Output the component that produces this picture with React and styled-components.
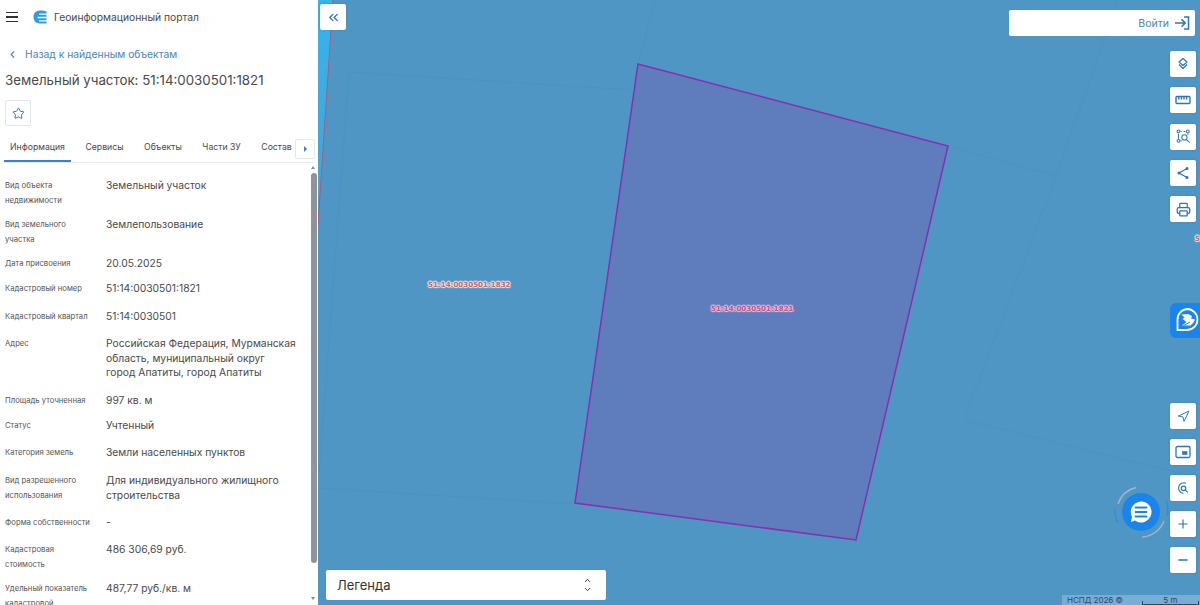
import React from "react";
import styled, { createGlobalStyle } from "styled-components";
import {
  ChevronLeft,
  ChevronsLeft,
  ChevronUp,
  ChevronDown,
  Star,
  Printer,
  Navigation,
  Plus,
  Minus,
} from "lucide-react";

const GlobalStyle = createGlobalStyle`
  html, body {
    margin: 0;
    padding: 0;
    height: 100%;
    overflow: hidden;
    font-family: Inter, "Noto Sans", sans-serif;
  }
  #root {
    height: 100%;
  }
`;

const Page = styled.div`
  display: flex;
  width: 1200px;
  height: 605px;
  overflow: hidden;
`;

const Sidebar = styled.aside`
  width: 318px;
  flex: 0 0 318px;
  display: flex;
  flex-direction: column;
  background: #fff;
  position: relative;
  overflow: hidden;

  & > * {
    flex-shrink: 0;
  }
`;

const Header = styled.div`
  display: flex;
  align-items: center;
  height: 34px;
  padding-left: 6px;
  font-size: 10.3px;
  color: #4a4a4a;
`;

const Burger = styled.div`
  width: 12px;
  height: 8px;
  margin-right: 15px;
  border-top: 1.5px solid #333;
  border-bottom: 1.5px solid #333;
  position: relative;
  &::after {
    content: "";
    position: absolute;
    left: 0;
    right: 0;
    top: 3px;
    height: 1.5px;
    background: #333;
  }
`;

const LogoMark = styled.svg`
  width: 14px;
  height: 14px;
  margin-right: 7px;
`;

const BackLink = styled.div`
  display: flex;
  align-items: center;
  height: 20px;
  margin-top: 10px;
  padding-left: 7px;
  gap: 7px;
  font-size: 10.3px;
  color: #4a86c6;
`;

const Title = styled.h1`
  margin: 4px 0 0 5px;
  height: 24px;
  font-size: 13.3px;
  line-height: 24px;
  font-weight: 400;
  color: #4a4a4a;
`;

const FavButton = styled.div`
  width: 26px;
  height: 26px;
  box-sizing: border-box;
  margin: 8px 0 0 5px;
  display: flex;
  align-items: center;
  justify-content: center;
  border: 1px solid #dfe6ee;
  border-radius: 2px;
  color: #3173bb;
`;

const Tabs = styled.div`
  position: relative;
  display: flex;
  gap: 8.5px;
  height: 23px;
  margin: 13px 0 0 4px;
  width: 311px;
  border-bottom: 1px solid #e8eaed;
  font-size: 8.7px;
  color: #4a4a4a;
`;

const Tab = styled.div`
  padding: 0 6px;
  line-height: 16px;
  white-space: nowrap;
  height: 23px;
  box-sizing: border-box;
  border-bottom: ${({ $active }) => ($active ? "2px solid #3f7fc4" : "0")};
`;

const TabArrow = styled.div`
  position: absolute;
  right: 0;
  top: 0;
  width: 20px;
  height: 20px;
  box-sizing: border-box;
  display: flex;
  align-items: center;
  justify-content: center;
  background: #fff;
  border: 1px solid #e4e8ee;
  border-radius: 2px;
  &::after {
    content: "";
    border-left: 3px solid #3f7fc4;
    border-top: 3px solid transparent;
    border-bottom: 3px solid transparent;
  }
`;

const Info = styled.div`
  display: flex;
  flex-direction: column;
  padding: 16px 0 0 5px;
`;

const Row = styled.div`
  display: grid;
  grid-template-columns: 101px 192px;
  height: ${({ $h }) => $h}px;
  flex: none;
`;

const Label = styled.div`
  font-size: 7.7px;
  line-height: 14.5px;
  color: #555;
  padding-right: 12px;
`;

const Value = styled.div`
  font-size: 10.3px;
  line-height: 14.5px;
  color: #4a4a4a;
  margin-top: -1px;
  white-space: pre-line;
`;

const ScrollTrack = styled.div`
  position: absolute;
  right: 1px;
  top: 164px;
  bottom: 0;
  width: 7px;
`;

const ScrollThumb = styled.div`
  position: absolute;
  left: 0.5px;
  top: 9px;
  width: 6px;
  height: 390px;
  background: #8f9499;
  border-radius: 3px;
`;

const ScrollUp = styled.div`
  position: absolute;
  left: 1px;
  top: 2px;
  border-bottom: 3px solid #888;
  border-left: 2.5px solid transparent;
  border-right: 2.5px solid transparent;
`;

const ScrollDown = styled.div`
  position: absolute;
  left: 1px;
  bottom: 5px;
  border-top: 3px solid #888;
  border-left: 2.5px solid transparent;
  border-right: 2.5px solid transparent;
`;

const MapArea = styled.main`
  position: relative;
  flex: 1;
  height: 605px;
  background: #4f96c4;
  overflow: hidden;
`;

const MapLayer = styled.svg`
  position: absolute;
  inset: 0;
  width: 882px;
  height: 605px;
`;

const ParcelLabel = styled.div`
  position: absolute;
  left: ${({ $x }) => $x}px;
  top: ${({ $y }) => $y}px;
  font-family: "DejaVu Sans", sans-serif;
  font-size: 7.1px;
  font-weight: 700;
  line-height: 10px;
  white-space: nowrap;
  color: ${({ $color }) => $color};
  text-shadow: 0 0 1px ${({ $halo }) => $halo}, 0 0 2px ${({ $halo }) => $halo},
    1px 0 1px ${({ $halo }) => $halo}, -1px 0 1px ${({ $halo }) => $halo},
    0 1px 1px ${({ $halo }) => $halo}, 0 -1px 1px ${({ $halo }) => $halo};
`;

const MapButton = styled.div`
  width: 26px;
  height: 26px;
  display: flex;
  align-items: center;
  justify-content: center;
  background: #fff;
  border-radius: 2px;
  color: #2f74b8;
  box-shadow: 0 0 2px rgba(40, 70, 100, 0.25);
`;

const CollapseButton = styled(MapButton)`
  position: absolute;
  left: 2px;
  top: 4px;
`;

const LoginBar = styled.div`
  position: absolute;
  left: 691px;
  top: 10px;
  width: 186px;
  height: 26px;
  display: flex;
  align-items: center;
  justify-content: flex-end;
  gap: 5px;
  padding-right: 5px;
  box-sizing: border-box;
  background: #fff;
  border-radius: 2px;
  font-size: 10.5px;
  color: #4a86c6;
`;

const ToolStack = styled.div`
  position: absolute;
  left: 852px;
  top: ${({ $top }) => $top}px;
  display: flex;
  flex-direction: column;
  gap: ${({ $gap }) => $gap}px;
`;

const PortalBadge = styled.div`
  position: absolute;
  right: 0;
  top: 303px;
  width: 30px;
  height: 35px;
  display: flex;
  align-items: center;
  padding-left: 4px;
  box-sizing: border-box;
  background: #1a84ea;
  border-radius: 6px 0 0 6px;
`;

const ChatWidget = styled.div`
  position: absolute;
  left: 794px;
  top: 483px;
  width: 58px;
  height: 58px;
  display: flex;
  align-items: center;
  justify-content: center;
`;

const ChatRing = styled.svg`
  position: absolute;
  inset: 0;
  width: 58px;
  height: 58px;
`;

const ChatCircle = styled.div`
  width: 38px;
  height: 38px;
  display: flex;
  align-items: center;
  justify-content: center;
  border-radius: 50%;
  background: #1a84ea;
`;

const Legend = styled.div`
  position: absolute;
  left: 8px;
  top: 570px;
  width: 280px;
  height: 30px;
  display: flex;
  align-items: center;
  justify-content: space-between;
  padding: 0 14px 0 11px;
  box-sizing: border-box;
  background: #fff;
  border-radius: 2px;
  font-size: 13px;
  color: #333;
`;

const UpDown = styled.div`
  display: flex;
  flex-direction: column;
  color: #333;
  line-height: 0;
`;

const Attribution = styled.div`
  position: absolute;
  right: 0;
  bottom: 0;
  width: 138px;
  height: 10px;
  display: flex;
  align-items: center;
  gap: 19px;
  padding-left: 5px;
  box-sizing: border-box;
  background: rgba(170, 205, 230, 0.45);
  font-size: 8px;
  color: #2d4a66;
  white-space: nowrap;
`;

const ScaleBar = styled.div`
  width: 57px;
  height: 9px;
  line-height: 8px;
  text-align: center;
  position: relative;
  border-bottom: 1px solid #2d4a66;
  box-sizing: border-box;
  &::before,
  &::after {
    content: "";
    position: absolute;
    bottom: 0;
    width: 1px;
    height: 3px;
    background: #2d4a66;
  }
  &::before {
    left: 0;
  }
  &::after {
    right: 0;
  }
`;

const rows = [
  { h: 39, label: "Вид объекта недвижимости", value: "Земельный участок" },
  { h: 39, label: "Вид земельного участка", value: "Землепользование" },
  { h: 25, label: "Дата присвоения", value: "20.05.2025" },
  { h: 28, label: "Кадастровый номер", value: "51:14:0030501:1821" },
  { h: 27, label: "Кадастровый квартал", value: "51:14:0030501" },
  {
    h: 57,
    label: "Адрес",
    value:
      "Российская Федерация, Мурманская\nобласть, муниципальный округ\nгород Апатиты, город Апатиты",
  },
  { h: 25, label: "Площадь уточненная", value: "997 кв. м" },
  { h: 27, label: "Статус", value: "Учтенный" },
  { h: 28, label: "Категория земель", value: "Земли населенных пунктов" },
  {
    h: 42,
    label: "Вид разрешенного использования",
    value: "Для индивидуального жилищного строительства",
  },
  { h: 27, label: "Форма собственности", value: "-" },
  { h: 39, label: "Кадастровая стоимость", value: "486 306,69 руб." },
  {
    h: 40,
    label: "Удельный показатель кадастровой стоимости",
    value: "487,77 руб./кв. м",
  },
];

const tabs = [
  { name: "Информация", active: true },
  { name: "Сервисы" },
  { name: "Объекты" },
  { name: "Части ЗУ" },
  { name: "Состав" },
];

const LoginIcon = () => (
  <svg width="16" height="14" viewBox="0 0 16 14" fill="none" stroke="#2f74b8" strokeWidth="1.5">
    <path d="M1 7h10M7.500 3.300 11.200 7l-3.700 3.700" />
    <path d="M10 1h4.500v12H10" />
  </svg>
);

const LayersIcon = () => (
  <svg width="14" height="14" viewBox="0 0 14 14" fill="none" stroke="currentColor" strokeWidth="1.2" strokeLinejoin="round">
    <path d="M7 1.500 11 5 7 8.500 3 5Z" />
    <path d="M3 7.500 7 11.500l4-4" />
  </svg>
);

const RulerIcon = () => (
  <svg width="16" height="10" viewBox="0 0 16 10" fill="none" stroke="currentColor" strokeWidth="1.4">
    <rect x="1" y="1.500" width="14" height="7" rx="1" />
    <path d="M3.800 2v2.500M6.400 2v2.500M9 2v2.500M11.600 2v2.500" />
  </svg>
);

const AreaSearchIcon = () => (
  <svg width="15" height="15" viewBox="0 0 16 16" fill="none" stroke="currentColor" strokeWidth="1.1">
    <circle cx="2.600" cy="2.600" r="1.500" />
    <circle cx="12.600" cy="2.600" r="1.500" />
    <circle cx="2.600" cy="12.600" r="1.500" />
    <path d="M5 2.600h1M8 2.600h2M2.600 5v5.500M4.500 12.600h1.500M12.600 4.500v1.500" />
    <circle cx="9" cy="9" r="2.800" />
    <path d="m11 11 3.500 3.500" />
  </svg>
);

const ShareIcon = () => (
  <svg width="12" height="12" viewBox="0 0 12 12" fill="currentColor" stroke="currentColor" strokeWidth="1.200">
    <path d="M10 1.500 2 6l8 4.500" fill="none" />
    <circle cx="10" cy="1.500" r="0.900" />
    <circle cx="2" cy="6" r="0.900" />
    <circle cx="10" cy="10.500" r="0.900" />
  </svg>
);

const WindowIcon = () => (
  <svg width="16" height="14" viewBox="0 0 16 14" fill="none" stroke="currentColor" strokeWidth="1.300">
    <rect x="1" y="1.500" width="14" height="11" rx="1.500" />
    <rect x="7.500" y="6.500" width="4.500" height="3" fill="currentColor" strokeWidth="0.600" />
  </svg>
);

const TargetIcon = () => (
  <svg width="14" height="14" viewBox="0 0 16 16" fill="none" stroke="currentColor" strokeWidth="1.300">
    <path d="M11.500 2.600A6 6 0 1 0 8.500 14" />
    <circle cx="8.600" cy="8.400" r="2.600" />
    <path d="m10.500 10.400 3 2.600" />
  </svg>
);

const PortalIcon = () => (
  <svg width="25" height="27" viewBox="0 0 25 27" fill="none">
    <path d="M13 2a10.500 10.500 0 1 1 0 21H3.500v-10A10.500 10.500 0 0 1 13 2Z" stroke="#fff" strokeWidth="1.800" />
    <path d="M7.500 7.500 14 7l4 2-1 2.500 4 1-1.500 3-3 3H8l4.500-3.500L8.500 12l2-1.500Z" fill="#fff" />
    <path d="M9.500 18.500 16 15" stroke="#1a84ea" strokeWidth="1" />
  </svg>
);

const ChatIcon = () => (
  <svg width="24" height="24" viewBox="0 0 24 24">
    <path d="M12 1.500a10.500 10.500 0 1 1-6 19.100L2 22l1-5A10.500 10.500 0 0 1 12 1.500Z" fill="#fff" />
    <path d="M6.500 7.500h11M6.500 12h11M6.500 16.500h11" stroke="#1a84ea" strokeWidth="1.800" strokeLinecap="round" />
  </svg>
);

const App = () => (
  <Page>
    <GlobalStyle />
    <Sidebar>
      <Header>
        <Burger />
        <LogoMark viewBox="0 0 14 14">
          <path d="M7 .5C3 .5.5 3.300.5 7s2.500 6.500 6.500 6.500h6.500v-2H6v-1.200h7.500V8.300H4.500V6.800h9V4.800H6V3.500h7.500V1.500C12 .9 10 .5 7 .5Z" fill="#2d9be8" />
        </LogoMark>
        Геоинформационный портал
      </Header>
      <BackLink>
        <ChevronLeft size={11} strokeWidth={2.5} />
        Назад к найденным объектам
      </BackLink>
      <Title>Земельный участок: 51:14:0030501:1821</Title>
      <FavButton>
        <Star size={13} strokeWidth={1.8} />
      </FavButton>
      <Tabs>
        {tabs.map((tab) => (
          <Tab key={tab.name} $active={tab.active}>
            {tab.name}
          </Tab>
        ))}
        <TabArrow />
      </Tabs>
      <Info>
        {rows.map((row) => (
          <Row key={row.label} $h={row.h}>
            <Label>{row.label}</Label>
            <Value>{row.value}</Value>
          </Row>
        ))}
      </Info>
      <ScrollTrack>
        <ScrollUp />
        <ScrollThumb />
        <ScrollDown />
      </ScrollTrack>
    </Sidebar>
    <MapArea>
      <MapLayer viewBox="318 0 882 605">
        <defs>
          <linearGradient id="edgeGlow" x1="0" y1="0" x2="0" y2="1">
            <stop offset="0" stopColor="#34b4ee" />
            <stop offset="1" stopColor="#4f9fd0" />
          </linearGradient>
        </defs>
        <path d="M318 0H333L318 225Z" fill="url(#edgeGlow)" />
        <g fill="none" stroke="#4d92c1" strokeWidth="1">
          <path d="M349 72 633 90" />
          <path d="M349 72 318 488" />
          <path d="M318 488 575 504" />
          <path d="M655 0 638 64" />
          <path d="M948 146 1056 176" />
          <path d="M1056 176 964 420 1200 478" />
          <path d="M1056 176 1118 0" />
        </g>
        <path d="M333 0 318 225" fill="none" stroke="#a0607e" strokeWidth="1" />
        <path d="M638 64 948 146 856 540 575 503Z" fill="#5f7dbd" stroke="#8a2cb4" strokeWidth="1.500" />
      </MapLayer>
      <ParcelLabel $x={110} $y={280} $color="#c8646a" $halo="#e6edf2">51:14:0030501:1832</ParcelLabel>
      <ParcelLabel $x={393} $y={304} $color="#c85088" $halo="#dcc8e6">51:14:0030501:1821</ParcelLabel>
      <ParcelLabel $x={877} $y={234} $color="#c8646a" $halo="#e6edf2">5</ParcelLabel>
      <CollapseButton>
        <ChevronsLeft size={15} strokeWidth={2.2} />
      </CollapseButton>
      <LoginBar>
        Войти
        <LoginIcon />
      </LoginBar>
      <ToolStack $top={51} $gap={10.3}>
        <MapButton><LayersIcon /></MapButton>
        <MapButton><RulerIcon /></MapButton>
        <MapButton><AreaSearchIcon /></MapButton>
        <MapButton><ShareIcon /></MapButton>
        <MapButton><Printer size={15} strokeWidth={2} /></MapButton>
      </ToolStack>
      <PortalBadge>
        <PortalIcon />
      </PortalBadge>
      <ToolStack $top={403} $gap={10}>
        <MapButton><Navigation size={13} strokeWidth={1.800} /></MapButton>
        <MapButton><WindowIcon /></MapButton>
        <MapButton><TargetIcon /></MapButton>
        <MapButton><Plus size={14} strokeWidth={2} /></MapButton>
        <MapButton><Minus size={14} strokeWidth={2.400} /></MapButton>
      </ToolStack>
      <ChatWidget>
        <ChatRing viewBox="0 0 58 58" fill="none" strokeWidth="1.400">
          <path d="M6 21A25 25 0 0 1 24 4.500" stroke="#9fb8cc" />
          <path d="M52 38A25 25 0 0 1 30 54" stroke="#9fb8cc" />
          <path d="M6 40A26 26 0 0 1 3 26" stroke="#2f8be0" />
          <path d="M54 17a27 27 0 0 1 1 16" stroke="#2f8be0" />
        </ChatRing>
        <ChatCircle>
          <ChatIcon />
        </ChatCircle>
      </ChatWidget>
      <Legend>
        Легенда
        <UpDown>
          <ChevronUp size={9} strokeWidth={2.600} />
          <ChevronDown size={9} strokeWidth={2.600} />
        </UpDown>
      </Legend>
      <Attribution>
        <span>НСПД 2026 ©</span>
        <ScaleBar>5 m</ScaleBar>
      </Attribution>
    </MapArea>
  </Page>
);

export default App;
